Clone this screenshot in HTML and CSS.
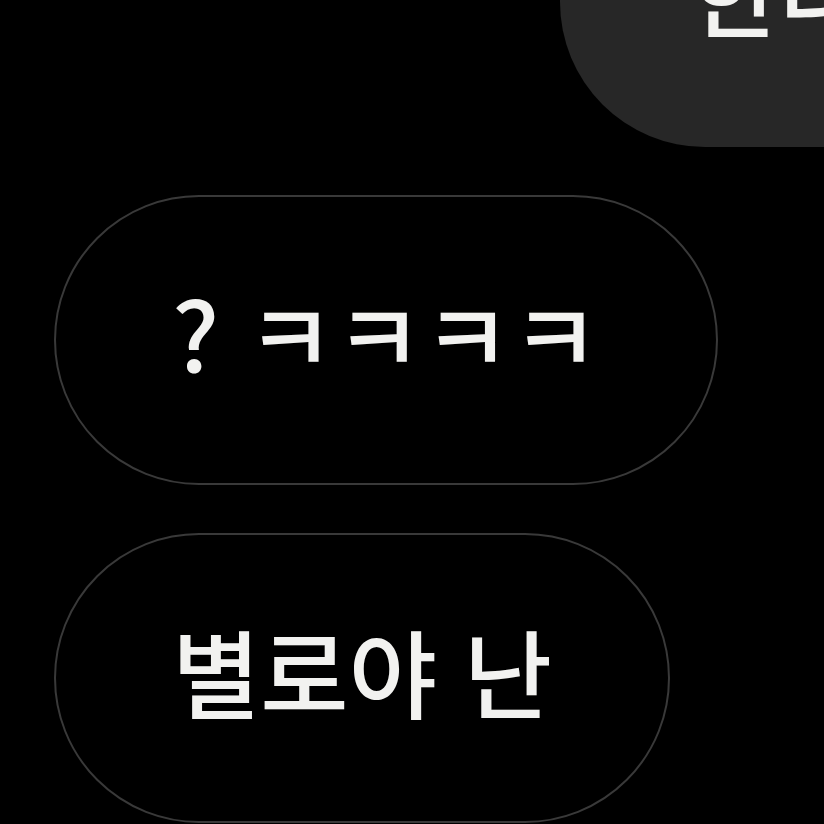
FILE: index.html
```html
<!DOCTYPE html>
<html lang="ko">
<head>
<meta charset="utf-8">
<link rel="stylesheet" href="styles.css">
</head>
<body>
<div class="chat">
  <div class="row row-right">
    <div class="bubble">한다고</div>
  </div>
  <div class="row">
    <div class="pill">? ㅋㅋㅋㅋ</div>
  </div>
  <div class="row">
    <div class="pill">별로야 난</div>
  </div>
</div>
</body>
</html>
```
FILE: styles.css
```css
html, body {
  margin: 0;
  padding: 0;
  background: #000;
}
body {
  width: 824px;
  height: 824px;
  overflow: hidden;
  font-family: "Noto Sans CJK KR", "Noto Sans", sans-serif;
  color: #f2f2f0;
}
.chat {
  display: flex;
  flex-direction: column;
  gap: 48px;
  padding-left: 54px;
}
.row {
  display: flex;
}
.row-right {
  justify-content: flex-end;
  margin-right: -300px;
}
.bubble {
  margin-top: -143px;
  height: 290px;
  box-sizing: border-box;
  width: 564px;
  background: #272727;
  border-radius: 145px;
  display: flex;
  align-items: center;
  padding-left: 131px;
  padding-bottom: 26px;
  font-size: 96px;
  line-height: 1;
  white-space: nowrap;
  font-weight: 500;
}
.pill {
  height: 290px;
  box-sizing: border-box;
  border: 2px solid #393939;
  border-radius: 145px;
  display: flex;
  align-items: center;
  justify-content: center;
  padding: 0 116px 16px;
  font-size: 96px;
  line-height: 1;
  font-weight: 500;
  white-space: nowrap;
}
```
